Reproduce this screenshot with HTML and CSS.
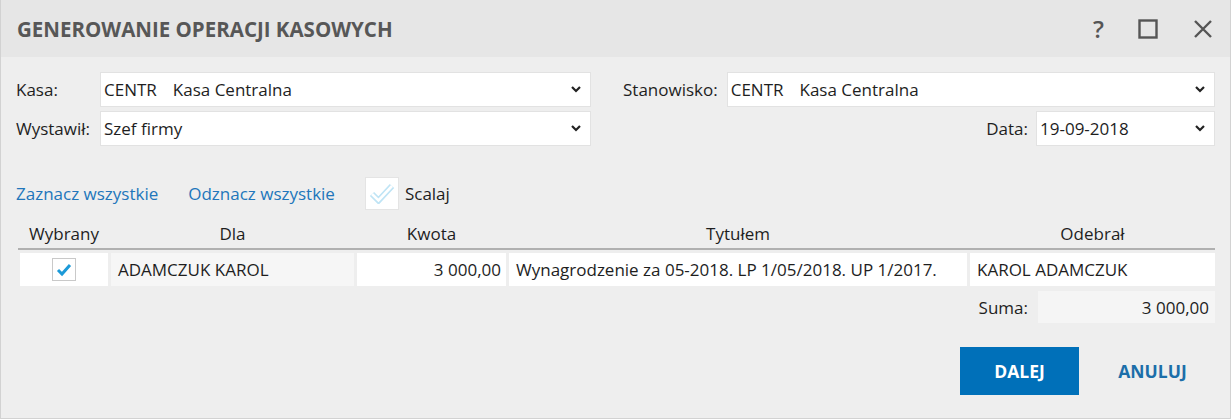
FILE: index.html
```html
<!DOCTYPE html>
<html lang="pl">
<head>
  <meta charset="UTF-8" />
  <title>Generowanie operacji kasowych</title>
  <link rel="stylesheet" href="styles.css">
</head>
<body>
  <div class="dialog">
    <div class="titlebar">
      <div class="title">GENEROWANIE OPERACJI KASOWYCH</div>
      <div class="title-actions">
        <span class="help">?</span>
        <svg class="icon-max" width="20" height="20" viewBox="0 0 20 20"><rect x="1.5" y="1.5" width="17" height="17" fill="none" stroke="#555" stroke-width="2.4"/></svg>
        <svg class="icon-close" width="20" height="20" viewBox="0 0 20 20"><path d="M2 2 L18 18 M18 2 L2 18" stroke="#555" stroke-width="2.4" fill="none"/></svg>
      </div>
    </div>

    <div class="content">
      <div class="form-row">
        <label class="label">Kasa:</label>
        <div class="select wide">
          <span><span class="code">CENTR</span>Kasa Centralna</span>
          <svg class="chev" width="10" height="7" viewBox="0 0 10 7"><path d="M1 1 L5 5 L9 1" stroke="#222" stroke-width="2.2" fill="none"/></svg>
        </div>
        <label class="label-right">Stanowisko:</label>
        <div class="select grow">
          <span><span class="code">CENTR</span>Kasa Centralna</span>
          <svg class="chev" width="10" height="7" viewBox="0 0 10 7"><path d="M1 1 L5 5 L9 1" stroke="#222" stroke-width="2.2" fill="none"/></svg>
        </div>
      </div>
      <div class="form-row">
        <label class="label">Wystawił:</label>
        <div class="select wide">
          <span>Szef firmy</span>
          <svg class="chev" width="10" height="7" viewBox="0 0 10 7"><path d="M1 1 L5 5 L9 1" stroke="#222" stroke-width="2.2" fill="none"/></svg>
        </div>
        <div class="spacer"></div>
        <label class="label-date">Data:</label>
        <div class="select date">
          <span>19-09-2018</span>
          <svg class="chev" width="10" height="7" viewBox="0 0 10 7"><path d="M1 1 L5 5 L9 1" stroke="#222" stroke-width="2.2" fill="none"/></svg>
        </div>
      </div>

      <div class="toolbar">
        <a class="link">Zaznacz wszystkie</a>
        <a class="link">Odznacz wszystkie</a>
        <div class="merge">
          <span class="merge-box">
            <svg width="26" height="22" viewBox="0 0 26 22">
              <path d="M3 12 L9.5 18.5 L23 4" stroke="#bfe4f5" stroke-width="6" fill="none"/>
              <path d="M3 12 L9.5 18.5 L23 4" stroke="#fff" stroke-width="2.6" fill="none"/>
            </svg>
          </span>
          <span>Scalaj</span>
        </div>
      </div>

      <div class="table">
        <div class="thead">
          <div>Wybrany</div>
          <div>Dla</div>
          <div>Kwota</div>
          <div>Tytułem</div>
          <div>Odebrał</div>
        </div>
        <div class="trow">
          <div class="cell center">
            <span class="check">
              <svg width="16" height="14" viewBox="0 0 16 14"><path d="M2 7 L6 11 L14 2" stroke="#1c9ad8" stroke-width="3" fill="none"/></svg>
            </span>
          </div>
          <div class="cell grey">ADAMCZUK KAROL</div>
          <div class="cell right">3 000,00</div>
          <div class="cell">Wynagrodzenie za 05-2018. LP 1/05/2018. UP 1/2017.</div>
          <div class="cell">KAROL ADAMCZUK</div>
        </div>
      </div>

      <div class="sum-row">
        <span class="sum-label">Suma:</span>
        <span class="sum-box">3 000,00</span>
      </div>

      <div class="actions">
        <button class="btn primary">DALEJ</button>
        <button class="btn plain">ANULUJ</button>
      </div>
    </div>
  </div>
</body>
</html>
```

FILE: styles.css
```css
body {
  margin: 0;
  font-family: "Open Sans", sans-serif;
  font-size: 17px;
  color: #1e1e1e;
}
.dialog {
  width: 1231px;
  height: 419px;
  box-sizing: border-box;
  border: 1px solid #d2d2d2;
  border-top: none;
  background: #eeeeee;
}
.titlebar {
  height: 57px;
  background: #e6e6e6;
  display: flex;
  align-items: center;
  padding: 0 17px 0 16px;
}
.title {
  flex: 1;
  font-size: 20.5px;
  font-weight: bold;
  color: #575757;
}
.title-actions {
  display: flex;
  align-items: center;
}
.help {
  font-size: 24px;
  font-weight: 600;
  color: #555;
  margin-right: 34px;
}
.icon-max {
  margin-right: 35px;
}
.content {
  padding: 15px 15px 0 15px;
}
.form-row {
  display: flex;
  align-items: center;
  margin-bottom: 4px;
}
.label {
  width: 84px;
}
.select {
  height: 35px;
  box-sizing: border-box;
  background: #fff;
  border: 1px solid #e2e2e2;
  display: flex;
  align-items: center;
  justify-content: space-between;
  padding: 0 9px 0 3px;
}
.select.wide {
  width: 491px;
}
.select.grow {
  flex: 1;
}
.select.date {
  width: 179px;
}
.code {
  margin-right: 16px;
}
.label-right {
  margin-left: 32px;
  margin-right: 9px;
}
.spacer {
  flex: 1;
}
.label-date {
  margin-right: 8px;
}
.toolbar {
  display: flex;
  align-items: center;
  height: 34px;
  margin-top: 30px;
}
.link {
  color: #2176bb;
  margin-right: 30px;
  cursor: pointer;
}
.merge {
  display: flex;
  align-items: center;
  gap: 6px;
}
.merge-box {
  width: 34px;
  height: 33px;
  box-sizing: border-box;
  background: #fff;
  border: 1px solid #e4e4e4;
  display: flex;
  align-items: center;
  justify-content: center;
}
.table {
  margin-top: 8px;
  margin-left: 4px;
}
.thead,
.trow {
  display: grid;
  grid-template-columns: 88px 243px 149px 458px 1fr;
  column-gap: 3px;
}
.thead {
  height: 30px;
  align-items: center;
  text-align: center;
  border-bottom: 2px solid #b0b0b0;
  margin-left: -2px;
  padding-left: 2px;
}
.trow {
  margin-top: 3px;
  height: 33px;
}
.cell {
  background: #fff;
  display: flex;
  align-items: center;
  padding: 0 7px;
  white-space: nowrap;
}
.cell.grey {
  background: #f6f6f6;
}
.cell.center {
  justify-content: center;
}
.cell.right {
  justify-content: flex-end;
  padding-right: 5px;
}
.check {
  width: 24px;
  height: 23px;
  box-sizing: border-box;
  border: 1px solid #c9c9c9;
  background: #fff;
  display: flex;
  align-items: center;
  justify-content: center;
}
.sum-row {
  display: flex;
  justify-content: flex-end;
  align-items: center;
  margin-top: 5px;
}
.sum-label {
  margin-right: 10px;
}
.sum-box {
  width: 177px;
  height: 32px;
  box-sizing: border-box;
  background: #f5f5f5;
  display: flex;
  align-items: center;
  justify-content: flex-end;
  padding-right: 6px;
}
.actions {
  display: flex;
  justify-content: flex-end;
  gap: 14px;
  margin-top: 24px;
  padding-right: 3px;
}
.btn {
  width: 119px;
  height: 48px;
  border: none;
  font-family: "Open Sans", sans-serif;
  font-size: 17.5px;
  font-weight: bold;
  cursor: pointer;
}
.btn.primary {
  background: #0070b9;
  color: #fff;
}
.btn.plain {
  background: transparent;
  color: #1c6ea9;
}
```
